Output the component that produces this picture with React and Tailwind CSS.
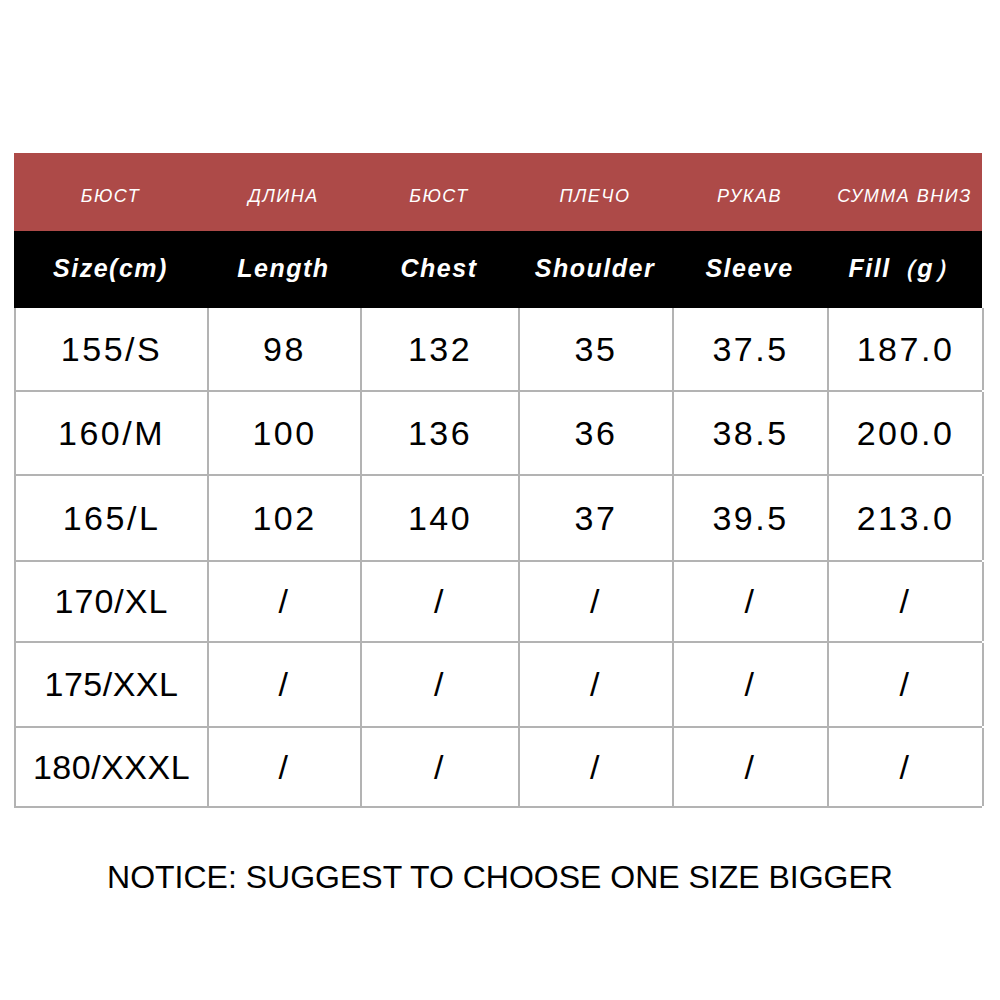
const cols = 'grid-cols-[193px_153px_158px_154px_155px_155px]';

const ruHeads = ['БЮСТ', 'ДЛИНА', 'БЮСТ', 'ПЛЕЧО', 'РУКАВ', 'СУММА ВНИЗ'];
const enHeads = ['Size(cm)', 'Length', 'Chest', 'Shoulder', 'Sleeve', 'Fill（g）'];

// first-column tracking gets tighter on the longer labels, as in the source image
const rows = [
  { h: 'h-[84px]', t: 'tracking-[2.5px]', cells: ['155/S', '98', '132', '35', '37.5', '187.0'] },
  { h: 'h-[84px]', t: 'tracking-[2.5px]', cells: ['160/M', '100', '136', '36', '38.5', '200.0'] },
  { h: 'h-[86px]', t: 'tracking-[2.5px]', cells: ['165/L', '102', '140', '37', '39.5', '213.0'] },
  { h: 'h-[81px]', t: 'tracking-[1px]', cells: ['170/XL', '/', '/', '/', '/', '/'] },
  { h: 'h-[85px]', t: 'tracking-[0.5px]', cells: ['175/XXL', '/', '/', '/', '/', '/'] },
  { h: 'h-[80px]', t: 'tracking-[0.5px]', cells: ['180/XXXL', '/', '/', '/', '/', '/'] },
];

export default function App() {
  return (
    <div className="w-[1000px] h-[1000px] bg-white font-['Liberation_Sans',Arial,sans-serif]">
      <div className="pt-[153px] pl-[14px]">
        <div className={`grid ${cols} w-[968px] h-[78px] bg-[#ad4a48] text-white italic text-[18px] tracking-[1.5px]`}>
          {ruHeads.map((t, i) => (
            <div key={i} className="flex items-center justify-center pt-[9px] whitespace-nowrap">{t}</div>
          ))}
        </div>
        <div className={`grid ${cols} w-[968px] h-[77px] bg-black text-white italic font-bold text-[25px] tracking-[1.5px]`}>
          {enHeads.map((t, i) => (
            <div key={i} className="flex items-center justify-center pb-[2px] whitespace-nowrap">{t}</div>
          ))}
        </div>
        <div className="w-[968px] border-l-2 border-[#b3b3b3]">
          {rows.map((r, ri) => (
            <div key={ri} className={`grid ${cols} ${r.h} border-b-2 border-[#b3b3b3] text-black text-[34px] tracking-[2.5px]`}>
              {r.cells.map((c, ci) => (
                <div
                  key={ci}
                  className={`flex items-center justify-center border-r-2 border-[#b3b3b3] whitespace-nowrap ${ci === 0 ? r.t : ''}`}
                >
                  {c}
                </div>
              ))}
            </div>
          ))}
        </div>
      </div>
      <div className="mt-[45px] text-center text-[32px] text-black">
        NOTICE: SUGGEST TO CHOOSE ONE SIZE BIGGER
      </div>
    </div>
  );
}
